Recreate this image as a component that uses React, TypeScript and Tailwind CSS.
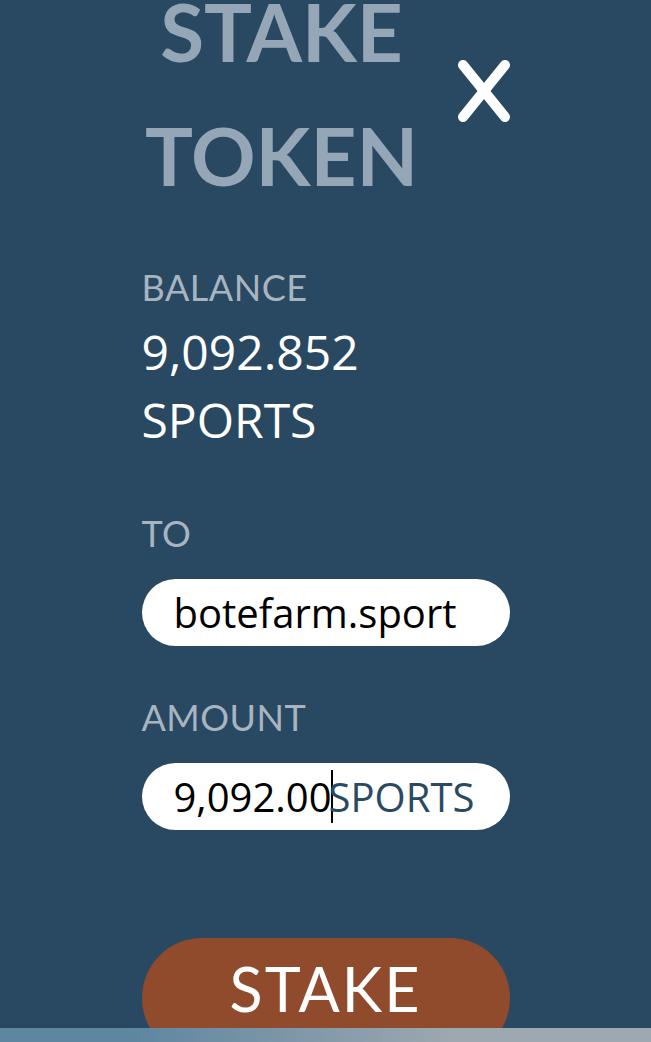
import React from 'react'

function CloseIcon() {
  return (
    <svg width="52" height="62" viewBox="0 0 52 62" className="block">
      <line x1="5" y1="5" x2="47" y2="57" stroke="white" strokeWidth="10" strokeLinecap="round" />
      <line x1="47" y1="5" x2="5" y2="57" stroke="white" strokeWidth="10" strokeLinecap="round" />
    </svg>
  )
}

export default function App() {
  return (
    <div className="w-[651px] h-[1042px] overflow-hidden bg-[#294862] flex flex-col">
      <div className="flex-1 flex justify-center overflow-hidden">
        <div className="w-[368px] flex flex-col">
          <div className="relative -mt-[31px] shrink-0">
            <h1 className="font-['Lato',sans-serif] font-bold text-[#95a7b7] text-[80px] leading-[124px] text-center pr-[88px]">
              STAKE
              <br />
              TOKEN
            </h1>
            <button className="absolute right-0 top-[91px]">
              <CloseIcon />
            </button>
          </div>

          <div className="mt-[52px] shrink-0 font-['Lato',sans-serif] text-[36px] tracking-[0.5px] leading-none text-[#a8b5c1]">BALANCE</div>
          <div className="mt-[13px] shrink-0 font-['Open_Sans',sans-serif] text-[48px] leading-[68px] text-white">
            9,092.852
            <br />
            SPORTS
          </div>

          <div className="mt-[61px] shrink-0 font-['Lato',sans-serif] text-[36px] tracking-[0.5px] leading-none text-[#a8b5c1]">TO</div>
          <div className="mt-[28px] h-[67px] shrink-0 rounded-full bg-white flex items-center pl-[32px] font-['Open_Sans',sans-serif] text-[40px] leading-none text-black">
            botefarm.sport
          </div>

          <div className="mt-[53px] shrink-0 font-['Lato',sans-serif] text-[36px] tracking-[0.5px] leading-none text-[#a8b5c1]">AMOUNT</div>
          <div className="mt-[28px] h-[67px] shrink-0 rounded-full bg-white flex items-center pl-[32px] font-['Open_Sans',sans-serif] text-[40px] leading-none text-black">
            <span>9,092.00</span>
            <span className="w-[2px] h-[53px] shrink-0 bg-black -ml-[1px]" />
            <span className="-ml-[4px] text-[#2b4a62]">SPORTS</span>
          </div>

          <button className="mt-[108px] h-[120px] shrink-0 rounded-full bg-[#8f4b2c] text-white font-['Lato',sans-serif] text-[61px] tracking-[2px] flex justify-center pt-[16px] leading-[70px]">
            STAKE
          </button>
        </div>
      </div>
      <div className="h-[14px] shrink-0 bg-linear-to-r from-[#5e86a0] from-20% to-[#9ea8b0] to-70%" />
    </div>
  )
}
